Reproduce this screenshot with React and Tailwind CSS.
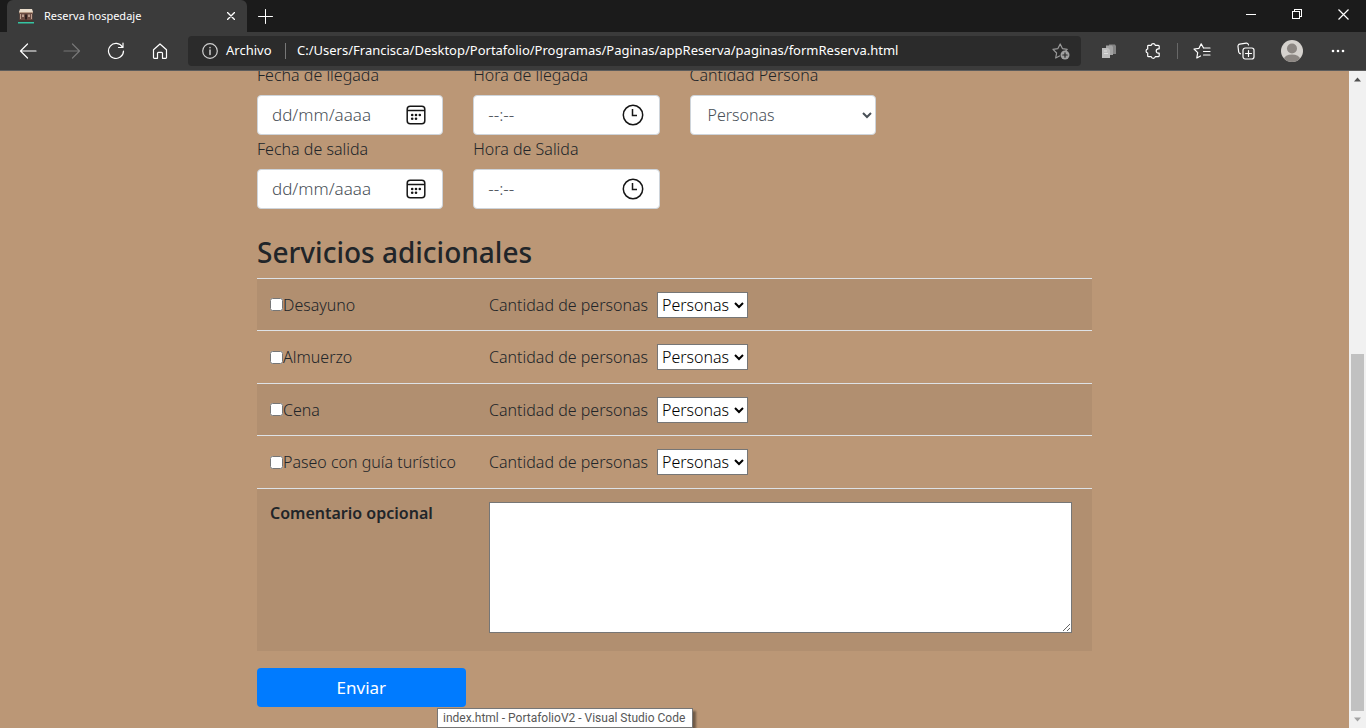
import React from "react";

const line = {
  fill: "none",
  stroke: "currentColor",
  strokeWidth: 1.2,
  strokeLinecap: "round",
  strokeLinejoin: "round",
  "aria-hidden": true,
};

function Favicon() {
  return (
    <svg width="16" height="16" viewBox="0 0 16 16" aria-hidden="true">
      <path d="M2 1h12l1 3H1z" fill="#e9dccb" />
      <path d="M1 4h14v1.5H1z" fill="#b59a85" />
      <path d="M1.500 5h13v8h-13z" fill="#6b4c43" />
      <path d="M2 6h1v5H2zM13 6h1v5h-1z" fill="#c0a090" />
      <path d="M4 6.500h2v2.500H4zM10 6.500h2v2.500h-2z" fill="#b89c8e" />
      <path d="M7 6.500h2v5H7z" fill="#2c2020" />
      <path d="M1 12h14v1.500H1z" fill="#4b342c" />
      <path d="M0 14h16v1.500H0z" fill="#35c4a2" />
    </svg>
  );
}

function IconButton({ label, children, className = "" }) {
  return (
    <button type="button" aria-label={label} className={`flex h-8 w-8 shrink-0 items-center justify-center ${className}`}>
      {children}
    </button>
  );
}

function TabStrip() {
  return (
    <div className="flex h-8 items-stretch bg-[#1b1b1b] pl-[7px] text-white">
      <div className="flex w-60 items-center rounded-t-md bg-[#3b3b3b] pl-[11px] pr-2">
        <Favicon />
        <span className="ml-2.5 flex-1 text-[11px]">Reserva hospedaje</span>
        <button type="button" aria-label="Cerrar pestaña" className="flex h-4 w-4 items-center justify-center">
          <svg width="8" height="8" viewBox="0 0 8 8" {...line} strokeWidth="1.400">
            <path d="M.5.5l7 7M7.500.5l-7 7" />
          </svg>
        </button>
      </div>
      <button type="button" aria-label="Nueva pestaña" className="flex w-9 items-center justify-center">
        <svg width="15" height="15" viewBox="0 0 15 15" {...line} strokeWidth="1">
          <path d="M7.500 .5v14M.5 7.500h14" />
        </svg>
      </button>
      <div className="ml-auto flex">
        <button type="button" aria-label="Minimizar" className="flex w-[46px] items-center justify-center">
          <svg width="10" height="10" viewBox="0 0 10 10" shapeRendering="crispEdges" aria-hidden="true">
            <path d="M0 3h10v1H0z" fill="currentColor" />
          </svg>
        </button>
        <button type="button" aria-label="Restaurar" className="flex w-[46px] items-center justify-center pb-1">
          <svg width="10" height="10" viewBox="0 0 10 10" fill="none" stroke="currentColor" shapeRendering="crispEdges" aria-hidden="true">
            <path d="M.5 2.500h7v7h-7zM2.500 2.500v-2h7v7h-2" />
          </svg>
        </button>
        <button type="button" aria-label="Cerrar" className="flex w-[46px] items-center justify-center pb-1">
          <svg width="11" height="11" viewBox="0 0 11 11" {...line} strokeLinecap="butt">
            <path d="M.5 .5l10 10M10.500 .5l-10 10" />
          </svg>
        </button>
      </div>
    </div>
  );
}

function Toolbar() {
  return (
    <div className="flex h-[39px] items-center border-b border-[#5c5c5c] bg-[#3b3b3b] pl-3 pr-3 text-white">
      <div className="flex gap-3">
        <IconButton label="Atrás">
          <svg width="18" height="18" viewBox="0 0 18 18" {...line}>
            <path d="M8.500 2L1.500 9l7 7M1.500 9h15.500" />
          </svg>
        </IconButton>
        <IconButton label="Adelante" className="text-[#777777]">
          <svg width="18" height="18" viewBox="0 0 18 18" {...line}>
            <path d="M9.500 2l7 7-7 7M16.500 9H1" />
          </svg>
        </IconButton>
        <IconButton label="Actualizar">
          <svg width="18" height="18" viewBox="0 0 18 18" {...line}>
            <path d="M15.500 5.200A7.500 7.500 0 1 0 16.500 9M16 1v4.500h-4.500" />
          </svg>
        </IconButton>
        <IconButton label="Inicio">
          <svg width="18" height="18" viewBox="0 0 18 18" {...line}>
            <path d="M2.500 7.800L9 2l6.500 5.800v7.700a.8.8 0 0 1-.8.800h-3.200v-5a1 1 0 0 0-1-1h-3a1 1 0 0 0-1 1v5H3.300a.8.800 0 0 1-.8-.8z" />
          </svg>
        </IconButton>
      </div>
      <div className="ml-3 flex h-[30px] min-w-0 flex-1 items-center rounded bg-[#2b2b2b] pl-3.5 pr-1 text-[13px]">
        <svg className="shrink-0" width="16" height="16" viewBox="0 0 16 16" {...line} stroke="#d0d0d0">
          <circle cx="8" cy="8" r="7.300" />
          <path d="M8 7v4.500M8 4.500v.2" strokeWidth="1.500" />
        </svg>
        <span className="ml-2 w-[47px] shrink-0 whitespace-nowrap">Archivo</span>
        <span className="ml-3 mr-[11px] h-4 w-px shrink-0 bg-[#777777]" />
        <input
          type="text"
          aria-label="Dirección"
          defaultValue="C:/Users/Francisca/Desktop/Portafolio/Programas/Paginas/appReserva/paginas/formReserva.html"
          className="min-w-0 flex-1 bg-transparent text-[13px] outline-none"
        />
        <IconButton label="Agregar a favoritos" className="text-[#9a9a9a]">
          <svg width="18" height="18" viewBox="0 0 18 18" {...line}>
            <path d="M7.500 14l-3.800 2 .9-5L1 7.300l4.900-.7L8.200 2l2.200 4.600 4.800.7-1.400 1.500" />
            <circle cx="13" cy="13" r="4.500" fill="#a0a0a0" stroke="none" />
            <path d="M13 10.800v4.400M10.800 13h4.400" stroke="#2b2b2b" />
          </svg>
        </IconButton>
      </div>
      <div className="ml-3 flex items-center">
        <IconButton label="Extensión">
          <svg width="16" height="16" viewBox="0 0 16 16" aria-hidden="true">
            <path d="M8 1.500h6l1 1.500v8H8z" fill="#858585" />
            <path d="M5 2.500h6l1 1.500v8H5z" fill="#a3a3a3" />
            <path d="M1 5h6l2 2v8H1z" fill="#bdbdbd" />
            <path d="M3 8h3M3 10.500h4" stroke="#dedede" />
          </svg>
        </IconButton>
        <IconButton label="Extensiones" className="ml-3">
          <svg width="18" height="18" viewBox="0 0 18 18" {...line} strokeWidth="1.200">
            <path d="M4.500 3.300h2.700a2.100 2.100 0 0 1 4.100 0h2.900a1 1 0 0 1 1 1v2.500h-.8a2.200 2.200 0 0 0 0 4.400h.8v2.500a1 1 0 0 1-1 1h-2.900a2.100 2.100 0 0 1-4.100 0H4.500a.8.800 0 0 1-.8-.8v-2.900a2.100 2.100 0 0 1 0-4.100V4.100a.8.800 0 0 1 .8-.8z" />
          </svg>
        </IconButton>
        <span className="mx-2 h-4 w-px bg-[#686868]" />
        <IconButton label="Favoritos">
          <svg width="18" height="18" viewBox="0 0 18 18" {...line}>
            <path d="M10.500 6L8.200 1.800 6 6.300l-5 .7 3.700 3.600-.9 5.400 3.700-2M11 6h6M10.500 9.500H17M10.500 13H17" />
          </svg>
        </IconButton>
        <IconButton label="Colecciones" className="ml-3">
          <svg width="18" height="18" viewBox="0 0 18 18" {...line}>
            <path d="M3.500 11.800l-.8-.4a2 2 0 0 1-1-1.400L1 4.500a2 2 0 0 1 1.700-2.300l6.500-1A2 2 0 0 1 11.500 3" />
            <rect x="6" y="6" width="11" height="11" rx="2.200" />
            <path d="M11.500 8.500v6M8.500 11.500h6" />
          </svg>
        </IconButton>
        <IconButton label="Perfil" className="ml-3.5">
          <svg width="22" height="22" viewBox="0 0 22 22" aria-hidden="true">
            <defs>
              <clipPath id="avatar">
                <circle cx="11" cy="11" r="11" />
              </clipPath>
            </defs>
            <g clipPath="url(#avatar)">
              <path d="M0 0h22v22H0z" fill="#d5d2ce" />
              <circle cx="11" cy="8.500" r="5" fill="#8c8783" />
              <ellipse cx="11" cy="19" rx="8" ry="4.500" fill="#8c8783" />
            </g>
          </svg>
        </IconButton>
        <IconButton label="Más opciones" className="ml-3.5">
          <svg width="14" height="4" viewBox="0 0 14 4" fill="currentColor" aria-hidden="true">
            <circle cx="2" cy="2" r="1.300" />
            <circle cx="7" cy="2" r="1.300" />
            <circle cx="12" cy="2" r="1.300" />
          </svg>
        </IconButton>
      </div>
    </div>
  );
}

function CalendarIcon() {
  return (
    <svg width="20" height="20" viewBox="0 0 20 20" fill="none" stroke="#161616" strokeWidth="1.500" aria-hidden="true">
      <rect x="1.200" y="1.200" width="17.600" height="17.600" rx="3" />
      <path d="M1.200 5.500h17.600" />
      <g fill="#161616" stroke="none">
        <circle cx="6.200" cy="10" r="1.300" />
        <circle cx="10" cy="10" r="1.300" />
        <circle cx="13.800" cy="10" r="1.300" />
        <circle cx="6.200" cy="13.800" r="1.300" />
        <circle cx="10" cy="13.800" r="1.300" />
      </g>
    </svg>
  );
}

function ClockIcon() {
  return (
    <svg width="22" height="22" viewBox="0 0 22 22" fill="none" stroke="#161616" strokeWidth="1.500" aria-hidden="true">
      <circle cx="11" cy="11" r="9.700" />
      <path d="M10.500 5v6.500H15" />
    </svg>
  );
}

function PickerField({ id, label, placeholder, kind }) {
  return (
    <div>
      <label htmlFor={id} className="mb-1.5 block leading-7">
        {label}
      </label>
      <div className="flex h-10 items-center rounded border border-[#ced4da] bg-white pl-3.5 pr-3.5">
        <input
          id={id}
          type="text"
          placeholder={placeholder}
          className="min-w-0 flex-1 bg-transparent text-[17px] text-[#495057] outline-none placeholder:text-[#495057]"
        />
        <button type="button" aria-label={`Elegir ${label.toLowerCase()}`} className="flex w-6 items-center justify-center">
          {kind === "date" ? <CalendarIcon /> : <ClockIcon />}
        </button>
      </div>
    </div>
  );
}

const services = [
  { id: "desayuno", label: "Desayuno" },
  { id: "almuerzo", label: "Almuerzo" },
  { id: "cena", label: "Cena" },
  { id: "paseo", label: "Paseo con guía turístico" },
];

function ReservationForm() {
  return (
    <form className="mx-auto -mt-2.5 w-full max-w-[835px] text-[16px] font-light text-[#212529]">
      <div className="grid grid-cols-4 gap-x-[30px]">
        <PickerField id="fecha-llegada" label="Fecha de llegada" placeholder="dd/mm/aaaa" kind="date" />
        <PickerField id="hora-llegada" label="Hora de llegada" placeholder="--:--" kind="time" />
        <div>
          <label htmlFor="cantidad" className="mb-1.5 block leading-7">
            Cantidad Persona
          </label>
          <select id="cantidad" className="h-10 w-full rounded border border-[#ced4da] bg-white pl-[13px] text-[#495057]">
            <option>Personas</option>
          </select>
        </div>
        <div className="col-start-1">
          <PickerField id="fecha-salida" label="Fecha de salida" placeholder="dd/mm/aaaa" kind="date" />
        </div>
        <PickerField id="hora-salida" label="Hora de Salida" placeholder="--:--" kind="time" />
      </div>

      <h2 className="mb-1.5 mt-6 text-[28px] font-medium leading-[39px]">Servicios adicionales</h2>

      <table className="w-full">
        <tbody>
          {services.map((s) => (
            <tr key={s.id} className="h-[52px] border-t border-[#dee2e6] odd:bg-black/5 even:h-[53px]">
              <td className="w-[219px] whitespace-nowrap pl-[13px]">
                <div className="flex items-center">
                  <input type="checkbox" id={s.id} className="m-0 h-[13px] w-[13px]" />
                  <label htmlFor={s.id}>{s.label}</label>
                </div>
              </td>
              <td className="pl-[13px]">
                <div className="flex items-center">
                  <label htmlFor={`${s.id}-personas`} className="w-42 whitespace-nowrap">
                    Cantidad de personas
                  </label>
                  <select id={`${s.id}-personas`} className="h-[26px] w-[91px] border border-[#767676] bg-white text-black">
                    <option>Personas</option>
                  </select>
                </div>
              </td>
            </tr>
          ))}
          <tr className="border-t border-[#dee2e6] bg-black/5 align-top">
            <th className="py-3 pl-[13px] text-left font-semibold">
              <label htmlFor="comentario">Comentario opcional</label>
            </th>
            <td className="py-[13px] pl-[13px] pr-5 pb-[18px]">
              <textarea id="comentario" className="block h-[131px] w-full border border-[#767676] bg-white p-0.5" />
            </td>
          </tr>
        </tbody>
      </table>

      <button type="submit" className="mt-[17px] h-[39px] w-1/4 rounded bg-[#007bff] text-[17px] font-normal text-white">
        Enviar
      </button>
    </form>
  );
}

function Scrollbar() {
  return (
    <div className="flex w-[17px] shrink-0 flex-col bg-[#f1f1f1] px-0.5" aria-hidden="true">
      <svg className="my-1.5 self-center" width="7" height="5" viewBox="0 0 7 5">
        <path d="M3.500 .5L7 4.500H0z" fill="#505050" />
      </svg>
      <div className="flex-[266]" />
      <div className="flex-[357] bg-[#c1c1c1]" />
      <svg className="my-1.5 self-center" width="7" height="5" viewBox="0 0 7 5">
        <path d="M3.500 4.500L7 .5H0z" fill="#a3a3a3" />
      </svg>
    </div>
  );
}

export default function App() {
  return (
    <div className="relative flex h-screen flex-col overflow-hidden bg-[#bb9776] font-['Noto_Sans','Open_Sans',sans-serif]">
      <header>
        <TabStrip />
        <Toolbar />
      </header>
      <div className="flex min-h-0 flex-1">
        <main className="min-w-0 flex-1 overflow-hidden">
          <ReservationForm />
        </main>
        <Scrollbar />
      </div>
      <div
        role="tooltip"
        className="absolute bottom-0 left-[437px] flex h-5 w-64 items-center border border-[#767676] bg-white px-[5px] font-['Roboto',sans-serif] text-[12px] whitespace-nowrap text-[#575757] shadow-[3px_3px_2px_rgba(0,0,0,0.4)]"
      >
        index.html - PortafolioV2 - Visual Studio Code
      </div>
    </div>
  );
}
